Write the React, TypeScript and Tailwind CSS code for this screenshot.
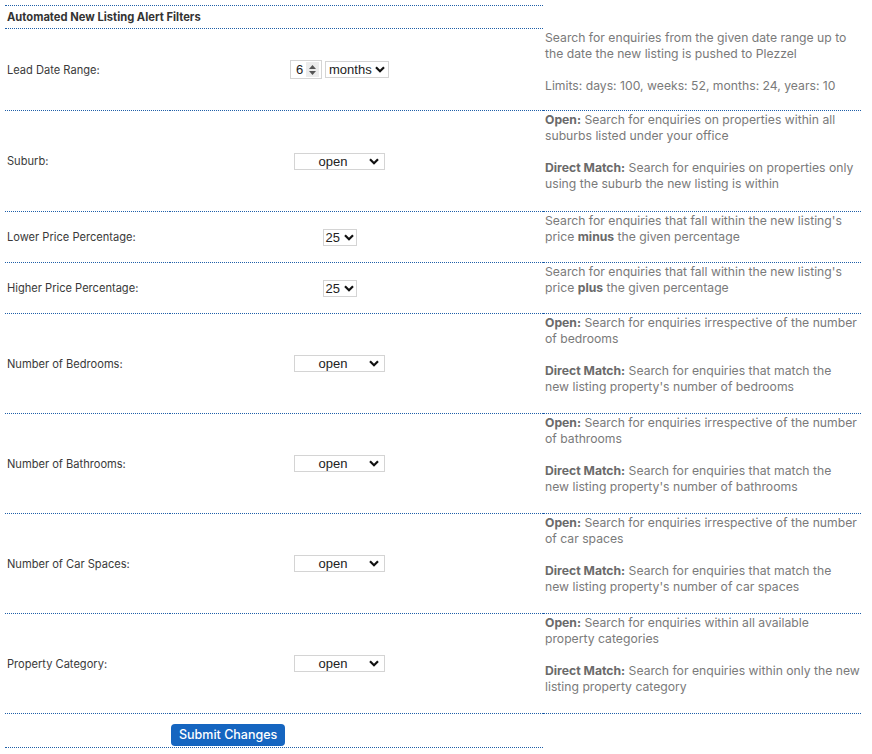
import React from "react";

const Chevron = () => (
  <svg width="10" height="7" viewBox="0 0 10 7" className="shrink-0">
    <path d="M1 1.2 L5 5.2 L9 1.2" fill="none" stroke="#111" strokeWidth="2.2" strokeLinejoin="miter" />
  </svg>
);

const OpenSelect = () => (
  <div className="flex h-[17px] w-[91px] items-center border border-[#d4d4d4] bg-white font-['Liberation_Sans',Arial,sans-serif] text-[13px] leading-none text-[#222]">
    <span className="flex-1 pl-[2px] text-center">open</span>
    <span className="mr-[5px]">
      <Chevron />
    </span>
  </div>
);

const PctSelect = () => (
  <div className="flex h-[17px] w-[34px] items-center gap-[4px] border border-[#d4d4d4] bg-white pl-[2px] font-['Liberation_Sans',Arial,sans-serif] text-[13px] leading-none text-[#222]">
    <span>25</span>
    <Chevron />
  </div>
);

const B = ({ children }: { children: React.ReactNode }) => (
  <b className="font-bold text-[#6a6a6a]">{children}</b>
);

type Row = { label: string; h: string; control: React.ReactNode; desc: React.ReactNode };

const OpenMatch = (o1: string, o2: string, d1: string, d2: string) => (
  <>
    <B>Open:</B> {o1}
    <br />
    {o2}
    <br />
    <br />
    <B>Direct Match:</B> {d1}
    <br />
    {d2}
  </>
);

const rows: Row[] = [
  {
    label: "Lead Date Range:",
    h: "h-[82px]",
    control: (
      <>
        <div className="flex h-[19px] w-[32px] items-center border border-[#d4d4d4] bg-white font-['Liberation_Sans',Arial,sans-serif] text-[13px] leading-none text-[#222]">
          <span className="pl-[5px]">6</span>
          <span className="ml-auto mr-[2px] flex h-[15px] w-[13px] flex-col items-center justify-center gap-[2px] bg-[#ececec]">
            <svg width="7" height="4" viewBox="0 0 7 4">
              <path d="M0 4 L3.5 0 L7 4 Z" fill="#555" />
            </svg>
            <svg width="7" height="4" viewBox="0 0 7 4">
              <path d="M0 0 L3.5 4 L7 0 Z" fill="#555" />
            </svg>
          </span>
        </div>
        <div className="flex h-[17px] w-[64px] items-center gap-[3px] border border-[#d4d4d4] bg-white pl-[3px] font-['Liberation_Sans',Arial,sans-serif] text-[13px] leading-none text-[#222]">
          <span>months</span>
          <Chevron />
        </div>
      </>
    ),
    desc: (
      <>
        Search for enquiries from the given date range up to
        <br />
        the date the new listing is pushed to Plezzel
        <br />
        <br />
        Limits: days: 100, weeks: 52, months: 24, years: 10
      </>
    ),
  },
  {
    label: "Suburb:",
    h: "h-[101px]",
    control: <OpenSelect />,
    desc: OpenMatch(
      "Search for enquiries on properties within all",
      "suburbs listed under your office",
      "Search for enquiries on properties only",
      "using the suburb the new listing is within"
    ),
  },
  {
    label: "Lower Price Percentage:",
    h: "h-[51px]",
    control: <PctSelect />,
    desc: (
      <>
        Search for enquiries that fall within the new listing's
        <br />
        price <B>minus</B> the given percentage
      </>
    ),
  },
  {
    label: "Higher Price Percentage:",
    h: "h-[51px]",
    control: <PctSelect />,
    desc: (
      <>
        Search for enquiries that fall within the new listing's
        <br />
        price <B>plus</B> the given percentage
      </>
    ),
  },
  {
    label: "Number of Bedrooms:",
    h: "h-[100px]",
    control: <OpenSelect />,
    desc: OpenMatch(
      "Search for enquiries irrespective of the number",
      "of bedrooms",
      "Search for enquiries that match the",
      "new listing property's number of bedrooms"
    ),
  },
  {
    label: "Number of Bathrooms:",
    h: "h-[100px]",
    control: <OpenSelect />,
    desc: OpenMatch(
      "Search for enquiries irrespective of the number",
      "of bathrooms",
      "Search for enquiries that match the",
      "new listing property's number of bathrooms"
    ),
  },
  {
    label: "Number of Car Spaces:",
    h: "h-[100px]",
    control: <OpenSelect />,
    desc: OpenMatch(
      "Search for enquiries irrespective of the number",
      "of car spaces",
      "Search for enquiries that match the",
      "new listing property's number of car spaces"
    ),
  },
  {
    label: "Property Category:",
    h: "h-[100px]",
    control: <OpenSelect />,
    desc: OpenMatch(
      "Search for enquiries within all available",
      "property categories",
      "Search for enquiries within only the new",
      "listing property category"
    ),
  },
];

export default function App() {
  return (
    <div className="bg-white p-[5px] font-['Inter',sans-serif] leading-4 text-[#3a3a3a]">
      <div className="flex h-[24px] w-[538px] items-center border-y border-dotted border-[#1f5fa8] px-[2px] text-[11.2px] font-bold text-[#333]">
        Automated New Listing Alert Filters
      </div>
      {rows.map((r) => (
        <div key={r.label} className={`flex ${r.h}`}>
          <div className="flex w-[165px] items-center border-b border-dotted border-[#1f5fa8] px-[2px] text-[11.1px]">
            {r.label}
          </div>
          <div className="flex w-[373px] items-center justify-center gap-[3px] border-b border-dotted border-[#1f5fa8] pr-[34px]">
            {r.control}
          </div>
          <div className="w-[318px] whitespace-nowrap border-b border-dotted border-[#1f5fa8] pl-[2px] pt-px text-[12.2px] text-[#7a7a7a]">
            {r.desc}
          </div>
        </div>
      ))}
      <div className="flex h-[34px] w-[538px] items-start border-b border-dotted border-[#1f5fa8]">
        <div className="w-[166px]" />
        <button className="mt-[10px] h-[22px] rounded-[4px] bg-[#1565c0] px-[8px] text-[12.5px] font-medium leading-none text-white">
          Submit Changes
        </button>
      </div>
    </div>
  );
}
